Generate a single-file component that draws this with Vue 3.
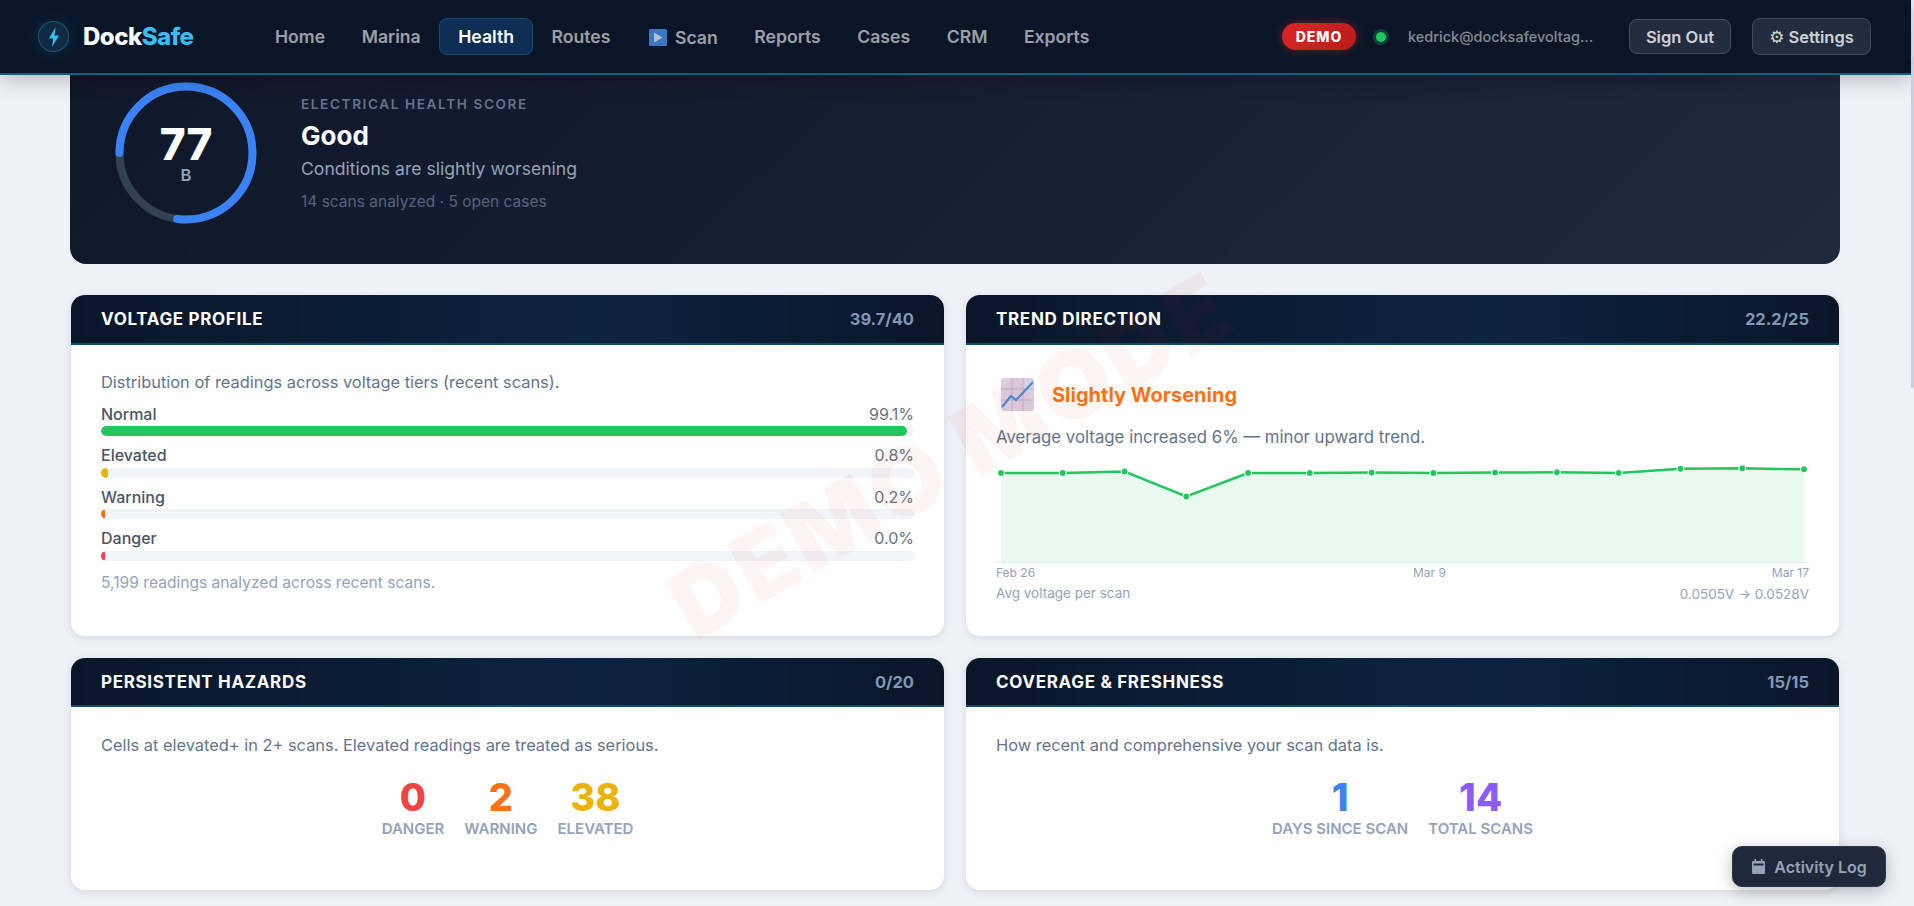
<template>
  <div class="page">
    <header class="nav">
      <div class="brand">
        <span class="brand-mark">
          <svg width="16" height="22" viewBox="0 0 16 22"><path d="M9.6 1 3 12.4h4.2L6 21l7-11.6H8.6z" fill="#38bdf8"/></svg>
        </span>
        <span class="brand-name">Dock<b>Safe</b></span>
      </div>
      <nav class="links">
        <a v-for="l in links" :key="l.name" :class="['link', l.name === 'Health' ? 'on' : '', l.icon ? 'with-icon' : '']">
          <svg v-if="l.icon" class="play" width="18" height="17" viewBox="0 0 18 17"><rect width="18" height="17" rx="1.5" fill="#3b78c4"/><path d="M5 3.5 13.5 8.5 5 13.5z" fill="#b9bfcc"/></svg>
          {{ l.name }}
        </a>
      </nav>
      <div class="right">
        <span class="demo">DEMO</span>
        <span class="dot"></span>
        <span class="email">kedrick@docksafevoltag...</span>
        <button class="btn signout">Sign Out</button>
        <button class="btn settings"><span class="gear">⚙</span> Settings</button>
      </div>
    </header>

    <main class="main">
      <section class="hero">
        <div class="ring">
          <svg width="142" height="142" viewBox="0 0 142 142">
            <circle cx="71" cy="71" r="66.5" fill="none" stroke="#334155" stroke-width="8"/>
            <circle class="ring-arc" cx="71" cy="71" r="66.5" fill="none" stroke="#3b82f6" stroke-width="8" stroke-linecap="round" :stroke-dasharray="ringDash"/>
          </svg>
          <div class="ring-text">
            <div class="ring-score">77</div>
            <div class="ring-grade">B</div>
          </div>
        </div>
        <div class="hero-text">
          <div class="hero-label">ELECTRICAL HEALTH SCORE</div>
          <div class="hero-title">Good</div>
          <div class="hero-sub">Conditions are slightly worsening</div>
          <div class="hero-meta">14 scans analyzed · 5 open cases</div>
        </div>
      </section>

      <div class="grid">
        <section class="card">
          <div class="card-head"><span>VOLTAGE PROFILE</span><span class="pts">39.7/40</span></div>
          <div class="card-body">
            <p class="desc">Distribution of readings across voltage tiers (recent scans).</p>
            <div v-for="t in tiers" :key="t.name" class="tier">
              <div class="tier-row"><span class="tier-name">{{ t.name }}</span><span class="tier-pct">{{ t.pct }}%</span></div>
              <div class="track"><div class="fill" :style="{ width: t.pct + '%', background: t.color }"></div></div>
            </div>
            <p class="foot">5,199 readings analyzed across recent scans.</p>
          </div>
        </section>

        <section class="card">
          <div class="card-head"><span>TREND DIRECTION</span><span class="pts">22.2/25</span></div>
          <div class="card-body">
            <div class="trend">
              <svg width="33" height="33" viewBox="0 0 33 33">
                <rect width="33" height="33" rx="3.5" fill="#dccfe2"/>
                <path d="M0 11h33M0 22h33M11 0v33M22 0v33" stroke="#bfaec8" stroke-width="1"/>
                <path d="M1 29 10 18l5 4L32 4" fill="none" stroke="#3f8fd8" stroke-width="2.2"/>
              </svg>
              <span>Slightly Worsening</span>
            </div>
            <p class="desc trend-desc">Average voltage increased 6% — minor upward trend.</p>
            <svg class="chart" width="812" height="103" viewBox="0 0 812 103">
              <polygon :points="areaPoints" fill="#22c55e" fill-opacity="0.1"/>
              <polyline :points="linePoints" fill="none" stroke="#22c55e" stroke-width="2.5"/>
              <circle v-for="(p, i) in points" :key="i" :cx="p[0]" :cy="p[1]" r="3.5" fill="#22c55e" stroke="#fff" stroke-width="1"/>
              <line x1="0" y1="102.5" x2="812" y2="102.5" stroke="#e2e8f0"/>
            </svg>
            <div class="axis"><span>Feb 26</span><span class="axis-mid">Mar 9</span><span>Mar 17</span></div>
            <div class="chart-foot"><span>Avg voltage per scan</span><span class="range">0.0505V → 0.0528V</span></div>
          </div>
        </section>

        <section class="card">
          <div class="card-head"><span>PERSISTENT HAZARDS</span><span class="pts">0/20</span></div>
          <div class="card-body">
            <p class="desc">Cells at elevated+ in 2+ scans. Elevated readings are treated as serious.</p>
            <div class="stats">
              <div class="stat"><div class="num" style="color:#ef4444">0</div><div class="lbl">DANGER</div></div>
              <div class="stat"><div class="num" style="color:#f97316">2</div><div class="lbl">WARNING</div></div>
              <div class="stat"><div class="num" style="color:#eab308">38</div><div class="lbl">ELEVATED</div></div>
            </div>
          </div>
        </section>

        <section class="card">
          <div class="card-head"><span>COVERAGE &amp; FRESHNESS</span><span class="pts">15/15</span></div>
          <div class="card-body">
            <p class="desc">How recent and comprehensive your scan data is.</p>
            <div class="stats">
              <div class="stat"><div class="num" style="color:#3b82f6">1</div><div class="lbl">DAYS SINCE SCAN</div></div>
              <div class="stat"><div class="num" style="color:#8b5cf6">14</div><div class="lbl">TOTAL SCANS</div></div>
            </div>
          </div>
        </section>
      </div>
    </main>

    <div class="watermark">DEMO MODE</div>

    <button class="activity">
      <svg width="15" height="15" viewBox="0 0 15 15"><path d="M3.5 0h1.6v2h4.8V0h1.6v2h1.2A1.3 1.3 0 0 1 14 3.3v10.4a1.3 1.3 0 0 1-1.3 1.3H2.3A1.3 1.3 0 0 1 1 13.7V3.3A1.3 1.3 0 0 1 2.3 2h1.2z" fill="#94a3b8"/><rect x="2.5" y="4.5" width="10" height="2" fill="#1e293b"/></svg>
      Activity Log
    </button>

    <div class="scroll-thumb"></div>
  </div>
</template>

<script setup>
import { computed } from 'vue'

const links = [
  { name: 'Home' },
  { name: 'Marina' },
  { name: 'Health' },
  { name: 'Routes' },
  { name: 'Scan', icon: true },
  { name: 'Reports' },
  { name: 'Cases' },
  { name: 'CRM' },
  { name: 'Exports' }
]

const tiers = [
  { name: 'Normal', pct: '99.1', color: '#22c55e' },
  { name: 'Elevated', pct: '0.8', color: '#eab308' },
  { name: 'Warning', pct: '0.2', color: '#f97316' },
  { name: 'Danger', pct: '0.0', color: '#ef4444' }
]

// ring: 77 of 100 around a circle of r=66.5
const ringDash = computed(() => {
  const len = 2 * Math.PI * 66.5
  return `${len * 0.77} ${len}`
})

const ys = [13, 13, 11.5, 36.5, 13, 13, 12.6, 13, 12.6, 12.2, 13, 8.8, 8.3, 9.3]
const points = computed(() => ys.map((y, i) => [5 + i * (803 / 13), y]))
const linePoints = computed(() => points.value.map(p => p.join(',')).join(' '))
const areaPoints = computed(() => `5,102 ${linePoints.value} 808,102`)
</script>

<style scoped>
.page { position: relative; height: 906px; overflow: hidden; background: #eef2f7; font-family: Inter, "Noto Sans", sans-serif; }

.nav {
  height: 73px; display: flex; align-items: center; padding: 0 40px 0 38px; margin-right: 3px;
  background: #0a1628; border-bottom: 2px solid #0b6285;
  box-shadow: 0 4px 20px rgba(0,0,0,.25); position: relative; z-index: 5;
}
.brand { display: flex; align-items: center; gap: 14px; width: 219px; flex-shrink: 0; }
.brand-mark {
  width: 31px; height: 31px; border-radius: 50%; display: flex; align-items: center; justify-content: center;
  background: rgba(56,189,248,.12); border: 1px solid rgba(56,189,248,.3); box-sizing: border-box;
  box-shadow: 0 0 14px rgba(56,189,248,.15);
}
.brand-name { font-size: 24px; font-weight: 800; color: #fff; letter-spacing: -.5px; }
.brand-name b { color: #38bdf8; font-weight: 800; }

.links { display: flex; align-items: center; gap: .6px; }
.link {
  padding: 0 17px; height: 37px; display: flex; align-items: center; box-sizing: border-box;
  font-size: 17.6px; font-weight: 600; color: rgba(255,255,255,.6); border: 1px solid transparent; border-radius: 8px;
}
.link.on { background: #0d2d52; border-color: #14497a; color: #fff; padding: 0 18px; }
.link.with-icon { gap: 8px; padding-top: 2px; margin-left: 2px; }

.right { margin-left: auto; display: flex; align-items: center; }
.demo {
  width: 74px; height: 27px; border-radius: 14px; display: flex; align-items: center; justify-content: center;
  background: linear-gradient(135deg, #dc2626, #b91c1c); color: #fff; font-size: 14px; font-weight: 800; letter-spacing: 1px;
  box-shadow: 0 0 10px rgba(220,38,38,.45);
}
.dot { width: 10px; height: 10px; border-radius: 50%; background: #22c55e; margin: 0 22px 0 20px; box-shadow: 0 0 0 3px rgba(34,197,94,.25); }
.email { font-size: 14.5px; color: rgba(255,255,255,.5); font-weight: 500; width: 197px; margin-right: 24px; white-space: nowrap; }
.btn {
  font-family: inherit; font-size: 16.5px; font-weight: 600; color: rgba(255,255,255,.8);
  background: #222d3f; border: 1px solid #414c5c; border-radius: 8px;
}
.signout { width: 102px; height: 35px; margin-right: 21px; }
.settings { width: 119px; height: 37px; display: flex; align-items: center; justify-content: center; gap: 4px; padding-top: 2px; }
.gear { font-family: "DejaVu Sans", sans-serif; font-size: 17px; font-weight: 400; }

.main { padding: 0 74px 0 70px; }
.hero {
  display: flex; align-items: flex-start; gap: 44px; padding: 7px 45px 40px;
  background: linear-gradient(135deg, #0f172a, #1e293b); border-radius: 0 0 16px 16px;
}
.ring { position: relative; width: 142px; height: 142px; flex-shrink: 0; }
.ring-arc { transform: rotate(180deg); transform-origin: center; }
.ring-text { position: absolute; inset: 0; padding-bottom: 2px; display: flex; flex-direction: column; align-items: center; justify-content: center; }
.ring-score { font-size: 44px; font-weight: 800; color: #fff; line-height: 46px; }
.ring-grade { font-size: 16.5px; font-weight: 600; color: #94a3b8; line-height: 18px; margin-top: -1px; }
.hero-text { padding-top: 12px; }
.hero-label { font-size: 13.6px; font-weight: 600; letter-spacing: 1.6px; color: #64748b; line-height: 20px; }
.hero-title { font-size: 26px; font-weight: 700; color: #fff; line-height: 34px; margin-top: 5px; }
.hero-sub { font-size: 17.6px; color: #94a3b8; line-height: 22px; margin-top: 5px; }
.hero-meta { font-size: 15.5px; color: #55647d; line-height: 20px; margin-top: 12px; }

.grid { display: grid; grid-template-columns: 1fr 1fr; gap: 22px; margin: 31px 1px 0; }
.card { background: #fff; border-radius: 14px; overflow: hidden; box-shadow: 0 2px 8px rgba(15,23,42,.1); height: 341px; }
.card:nth-child(n+3) { height: 232px; }
.card:nth-child(n+3) .card-head { height: 47px; }
.card:nth-child(n+3) .card-body { padding-top: 29px; }
.card-head {
  height: 48px; display: flex; align-items: center; justify-content: space-between; padding: 0 30px;
  background: linear-gradient(90deg, #0a1628, #0c2340 60%, #0a1628); border-bottom: 2px solid #0b4f6c;
  color: #fff; font-size: 17px; font-weight: 700; letter-spacing: .68px;
}
.pts { color: #7f98b5; font-size: 16.5px; letter-spacing: 0; }
.card-body { padding: 28px 30px 0; }
.desc { margin: 0; font-size: 16.4px; line-height: 19px; color: #64748b; }

.tier { margin-top: 9px; height: 32.6px; }
.desc + .tier { margin-top: 12.5px; }
.tier-row { display: flex; justify-content: space-between; font-size: 16px; line-height: 19px; }
.tier-name { color: #4b5563; font-weight: 500; }
.tier-pct { color: #6b7280; }
.track { height: 10px; border-radius: 5px; background: #f1f5f9; margin-top: 2.5px; overflow: hidden; }
.fill { height: 100%; min-width: 4px; border-radius: 5px; }
.foot { margin: 11.5px 0 0; font-size: 15.6px; line-height: 20px; color: #94a3b8; }

.trend { display: flex; align-items: center; gap: 18px; color: #f97316; font-size: 20px; font-weight: 700; height: 33px; margin: 5px 0 0 5px; }
.trend-desc { margin-top: 17px; font-size: 16.8px; }
.chart { display: block; margin-top: 13px; }
.axis { display: flex; justify-content: space-between; font-size: 12px; color: #94a3b8; line-height: 16px; margin-top: 2px; }
.axis-mid { margin-left: 52px; }
.chart-foot { display: flex; justify-content: space-between; font-size: 13.5px; color: #94a3b8; line-height: 18px; margin-top: 3px; }
.range { margin-top: 1px; }

.stats { display: flex; justify-content: center; gap: 20px; margin-top: 20px; }
.stat { text-align: center; }
.num { font-size: 38px; font-weight: 800; line-height: 44px; }
.lbl { font-size: 15px; font-weight: 600; color: #94a3b8; line-height: 18px; margin-top: 1px; }

.watermark {
  position: absolute; left: 951px; top: 455px; transform: translate(-50%, -50%) rotate(-30deg);
  font-size: 94px; font-weight: 900; color: rgba(220,38,38,.05); white-space: nowrap; pointer-events: none; z-index: 3; letter-spacing: 4px;
}
.activity {
  position: absolute; right: 28px; bottom: 19px; width: 154px; height: 41px; z-index: 6;
  display: flex; align-items: center; justify-content: center; gap: 8px;
  font-family: inherit; font-size: 16px; font-weight: 600; color: #94a3b8;
  background: #1e293b; border: 1px solid #2b384b; border-radius: 10px; box-shadow: 0 4px 16px rgba(0,0,0,.25);
}
.scroll-thumb { position: absolute; top: 56px; right: 0; width: 3px; height: 332px; background: #c5cde0; border-radius: 2px; z-index: 7; }
</style>
